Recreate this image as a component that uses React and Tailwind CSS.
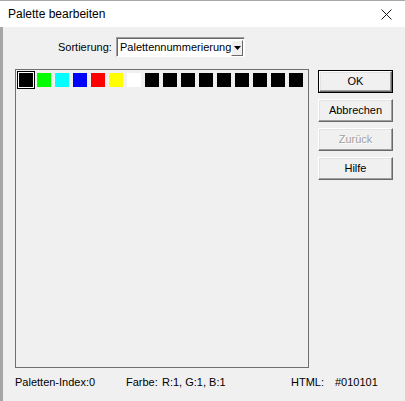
import React from 'react';

const colors = ['#000000', '#00ff00', '#00ffff', '#0000ff', '#ff0000', '#ffff00', '#ffffff',
    '#000000', '#000000', '#000000', '#000000', '#000000', '#000000', '#000000', '#000000', '#000000'];

function WinButton({children, isDefault, disabled}) {
    return (
        <div className={"h-[23px] w-[75px] " + (isDefault ? "border border-black" : "")}>
            <div className="h-full w-full flex items-center justify-center bg-[#f0f0f0] border border-t-white border-l-white border-b-[#696969] border-r-[#696969] shadow-[inset_-1px_-1px_0_#a0a0a0,inset_1px_1px_0_#e3e3e3]">
                <span className={disabled ? "text-[#a0a0a0] [text-shadow:1px_1px_0_#ffffff]" : "text-black"}>{children}</span>
            </div>
        </div>
    );
}

export default function App() {
    return (
        <div className="w-[405px] h-[401px] bg-[#f0f0f0] flex flex-col overflow-hidden text-[11px] text-black font-['Liberation_Sans',Arial,sans-serif]">
            {/* title bar */}
            <div className="h-[27px] shrink-0 bg-white border-t border-[#a8a8a8] flex items-center justify-between pl-2 pr-[13px]">
                <span className="text-[12px] leading-none">Palette bearbeiten</span>
                <svg width="11" height="11" viewBox="0 0 11 11">
                    <path d="M0.5 0.5 L10.5 10.5 M10.5 0.5 L0.5 10.5" stroke="#1a1a1a" strokeWidth="1" />
                </svg>
            </div>

            <div className="flex flex-1">
                <div className="w-[3px] bg-[#a6a6a6]"></div>
                <div className="flex flex-col pl-3">
                    {/* sort row */}
                    <div className="flex items-center mt-[10px] h-[20px]">
                        <span className="ml-[43px] w-[58px]">Sortierung:</span>
                        <div className="h-[20px] w-[129px] flex items-center bg-white border border-t-[#a0a0a0] border-l-[#a0a0a0] border-b-white border-r-white shadow-[inset_1px_1px_0_#696969]">
                            <span className="flex-1 pl-[3px] pt-[1px]">Palettennummerierung</span>
                            <div className="h-[16px] w-[16px] mr-[1px] mt-[1px] flex items-center justify-center bg-[#f0f0f0] border border-t-white border-l-white border-b-[#696969] border-r-[#696969]">
                                <svg width="7" height="4" viewBox="0 0 7 4">
                                    <path d="M0 0 H7 L3.5 4 Z" fill="#000" />
                                </svg>
                            </div>
                        </div>
                    </div>

                    {/* main area */}
                    <div className="flex mt-[12px]">
                        <div className="w-[294px] h-[299px] border border-[#6e6e6e] p-[1px]">
                            <div className="flex">
                                {colors.map((c, i) => (
                                    <div key={i} className={"w-[18px] h-[18px] flex items-center justify-center " + (i === 0 ? "border border-black" : "")}>
                                        <div className={i === 0 ? "w-[16px] h-[16px] border border-white flex" : "flex"}>
                                            <div className="w-[14px] h-[14px]" style={{backgroundColor: c}}></div>
                                        </div>
                                    </div>
                                ))}
                            </div>
                        </div>

                        <div className="flex flex-col gap-[6px] ml-[9px] mt-[1px]">
                            <WinButton isDefault>OK</WinButton>
                            <WinButton>Abbrechen</WinButton>
                            <WinButton disabled>Zurück</WinButton>
                            <WinButton>Hilfe</WinButton>
                        </div>
                    </div>

                    {/* status row */}
                    <div className="flex mt-[8px] leading-[13px]">
                        <span className="w-[111px]">Paletten-Index:0</span>
                        <span className="w-[36px]">Farbe:</span>
                        <span className="w-[129px]">R:1, G:1, B:1</span>
                        <span className="w-[44px]">HTML:</span>
                        <span>#010101</span>
                    </div>
                </div>
            </div>
        </div>
    );
}
